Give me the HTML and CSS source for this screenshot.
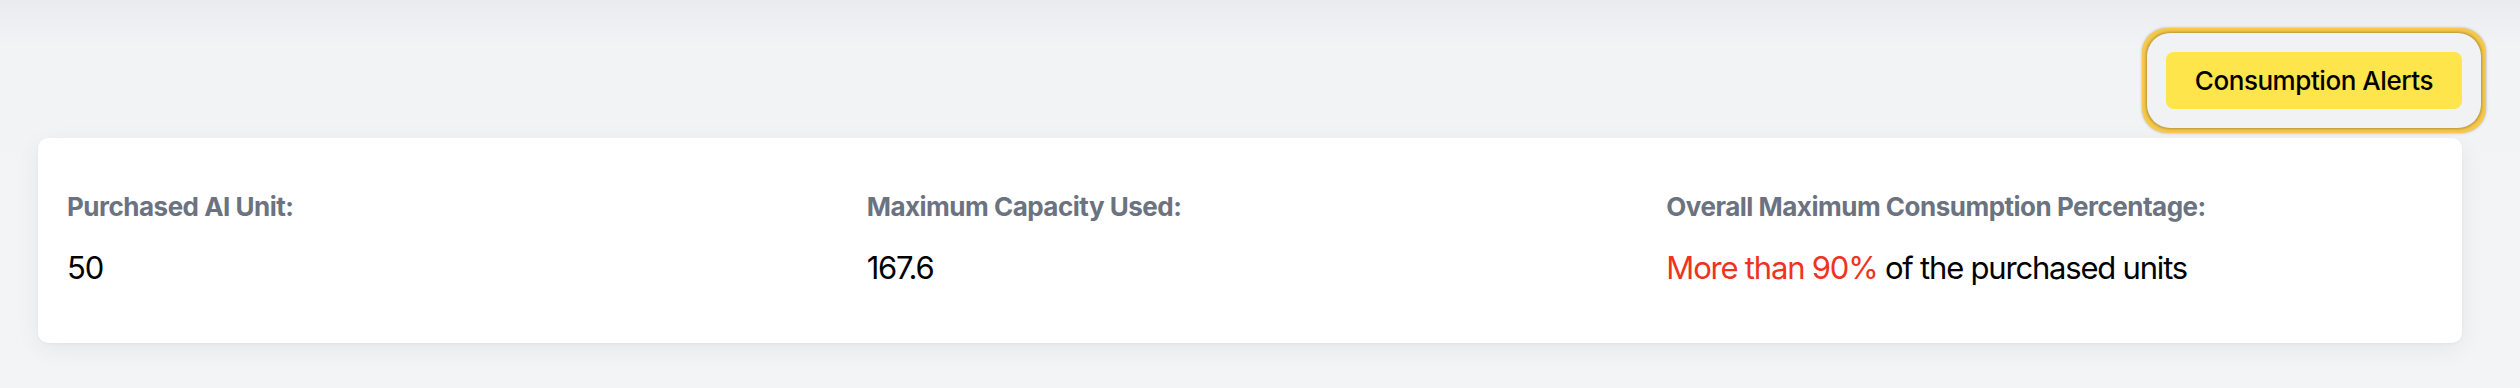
FILE: index.html
```html
<!DOCTYPE html>
<html lang="en">
<head>
<meta charset="utf-8">
<title>Consumption</title>
<link rel="stylesheet" href="styles.css">
</head>
<body>
<main class="page">
  <div class="toolbar">
    <button class="alerts-btn" type="button">Consumption Alerts</button>
  </div>
  <section class="card">
    <div class="stat">
      <div class="stat-label">Purchased AI Unit:</div>
      <div class="stat-value">50</div>
    </div>
    <div class="stat">
      <div class="stat-label">Maximum Capacity Used:</div>
      <div class="stat-value">167.6</div>
    </div>
    <div class="stat">
      <div class="stat-label">Overall Maximum Consumption Percentage:</div>
      <div class="stat-value"><span class="danger">More than 90%</span> of the purchased units</div>
    </div>
  </section>
</main>
</body>
</html>
```

FILE: styles.css
```css
html, body {
  margin: 0;
  padding: 0;
}
body {
  font-family: Inter, "Noto Sans", "Liberation Sans", sans-serif;
  background: linear-gradient(#eaebee 0, #f2f3f5 45px, #f3f4f6 100%);
  min-height: 388px;
  color: #000;
}
.page {
  padding: 52px 58px 0 38px;
}
.toolbar {
  display: flex;
  justify-content: flex-end;
  margin-bottom: 29px;
}
.alerts-btn {
  font-family: inherit;
  font-size: 26px;
  font-weight: 500;
  letter-spacing: -0.45px;
  color: #000;
  background: #fee54b;
  border: none;
  border-radius: 8px;
  height: 57px;
  padding: 0 29px;
  box-shadow:
    0 0 0 19px #f1f2f4,
    0 0 3px 20px rgba(0, 0, 0, 0.28),
    0 0 0 24px #f6c94b,
    0 0 3px 24px rgba(0, 0, 0, 0.28);
  cursor: pointer;
}
.card {
  background: #fff;
  border-radius: 10px;
  box-shadow: 0 6px 24px rgba(0, 0, 0, 0.06), 0 1px 3px rgba(0, 0, 0, 0.04);
  padding: 50px 30px 55px 29px;
  display: grid;
  grid-template-columns: repeat(3, 1fr);
  column-gap: 34px;
}
.stat-label {
  font-size: 26px;
  line-height: 38px;
  font-weight: 700;
  letter-spacing: -0.5px;
  color: #6b7280;
}
.stat-value {
  margin-top: 22px;
  font-size: 31px;
  line-height: 40px;
  font-weight: 400;
  letter-spacing: -1.2px;
  color: #000;
}
.danger {
  color: #f0321f;
}
```
